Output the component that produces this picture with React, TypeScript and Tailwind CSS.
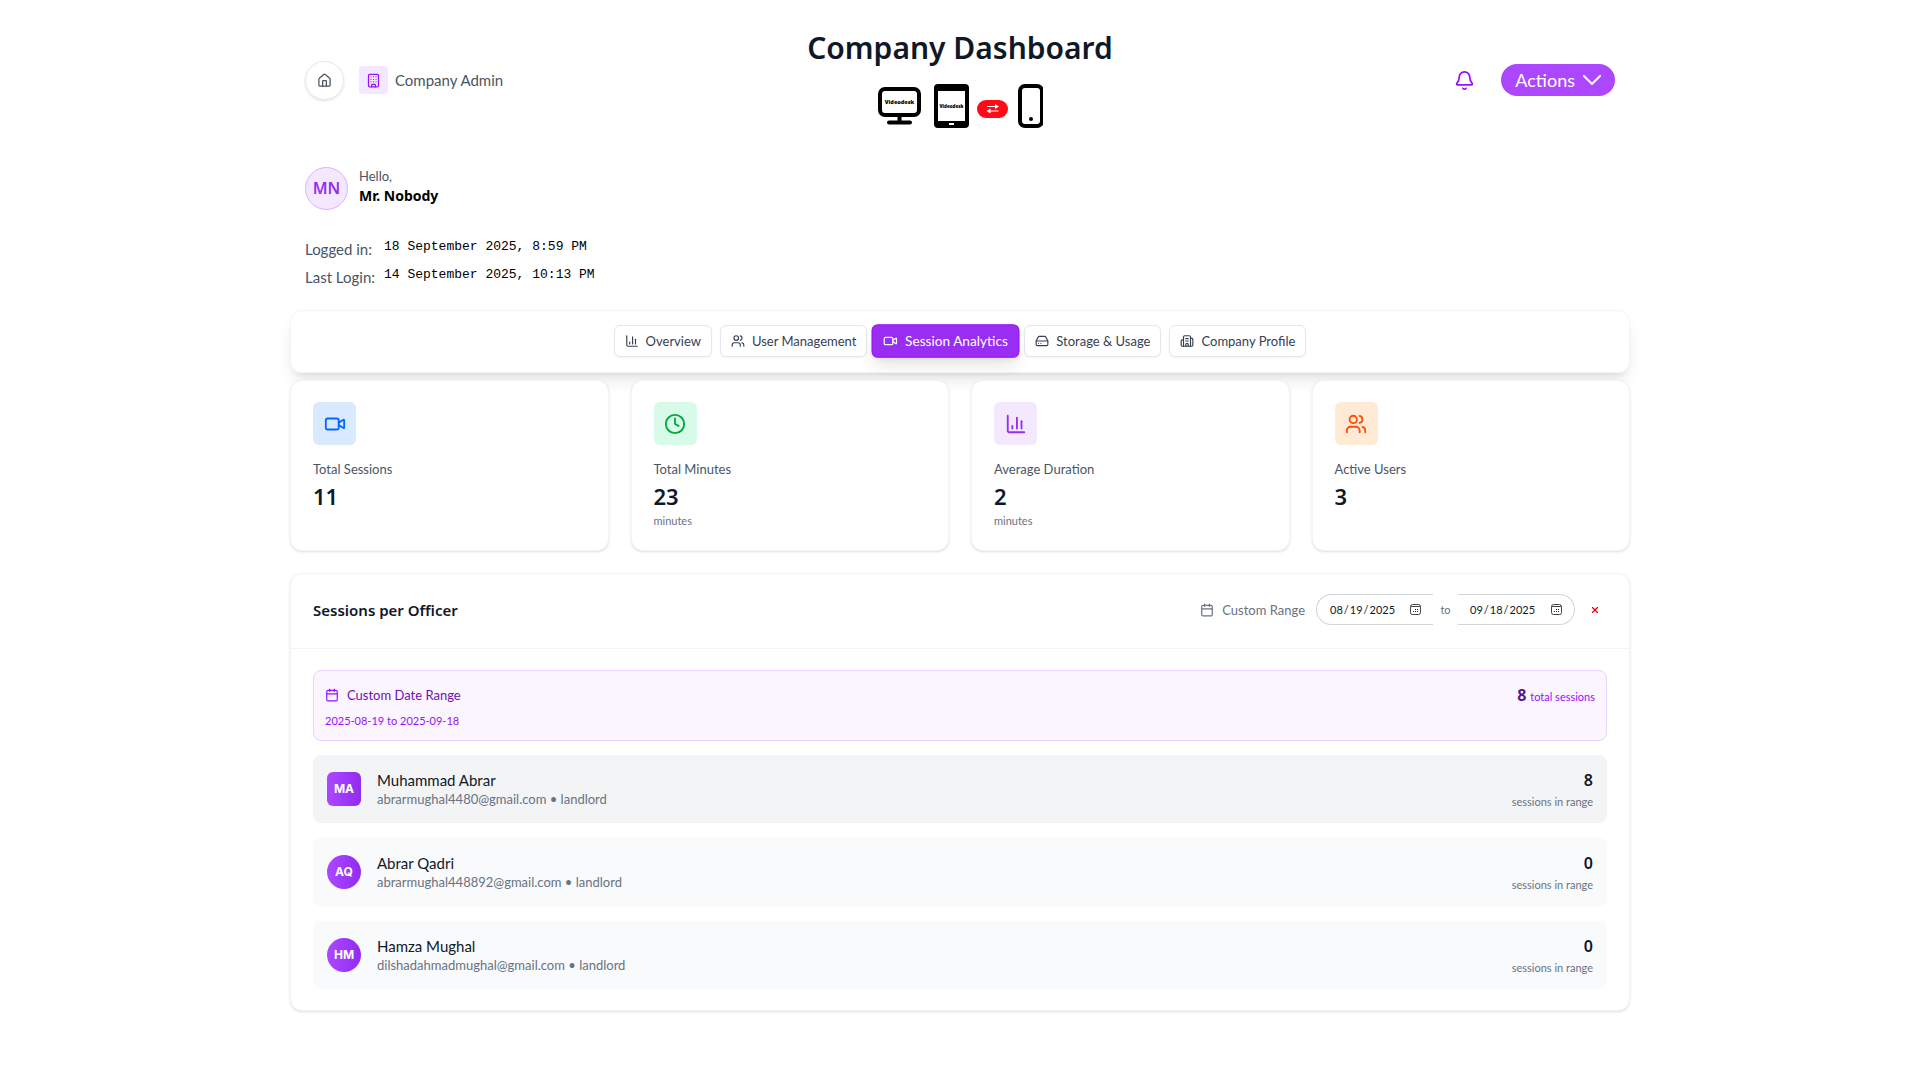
import React from "react";
import {
  Bell,
  Building,
  Building2,
  Calendar,
  ChartColumn,
  Clock,
  HardDrive,
  House,
  Users,
  Video,
  type LucideIcon,
} from "lucide-react";

const tabs: { label: string; icon: LucideIcon; active?: boolean }[] = [
  { label: "Overview", icon: ChartColumn },
  { label: "User Management", icon: Users },
  { label: "Session Analytics", icon: Video, active: true },
  { label: "Storage & Usage", icon: HardDrive },
  { label: "Company Profile", icon: Building2 },
];

const stats: { label: string; value: string; unit?: string; icon: LucideIcon; tone: string }[] = [
  { label: "Total Sessions", value: "11", icon: Video, tone: "bg-[#d8eafd] text-[#0866ff]" },
  { label: "Total Minutes", value: "23", unit: "minutes", icon: Clock, tone: "bg-[#d7fbe8] text-green-600" },
  { label: "Average Duration", value: "2", unit: "minutes", icon: ChartColumn, tone: "bg-[#f3e8fd] text-[#962df0]" },
  { label: "Active Users", value: "3", icon: Users, tone: "bg-[#ffead6] text-[#ff4d08]" },
];

const officers = [
  { initials: "MA", name: "Muhammad Abrar", email: "abrarmughal4480@gmail.com", role: "landlord", count: 8, row: "bg-gray-100", avatar: "rounded-md" },
  { initials: "AQ", name: "Abrar Qadri", email: "abrarmughal448892@gmail.com", role: "landlord", count: 0, row: "bg-gray-50", avatar: "rounded-full" },
  { initials: "HM", name: "Hamza Mughal", email: "dilshadahmadmughal@gmail.com", role: "landlord", count: 0, row: "bg-gray-50", avatar: "rounded-full" },
];

function DevicesLogo() {
  return (
    <svg width="166" height="46" viewBox="0 0 166 46" role="img" aria-label="Videodesk">
      <rect x="3" y="5" width="39" height="26" rx="5" fill="none" stroke="#000" strokeWidth="4" />
      <path d="M22.5 31v7M12 38.5h21" stroke="#000" strokeWidth="4" strokeLinecap="round" />
      <text x="22.5" y="20" textAnchor="middle" fontSize="5.5" fontWeight="900" fontFamily="Noto Sans, sans-serif">Videodesk</text>
      <rect x="57" y="0" width="35" height="44" rx="4" fill="#000" />
      <rect x="61" y="7" width="27" height="30" fill="#fff" />
      <rect x="72" y="39" width="5" height="2" fill="#fff" />
      <text x="74.5" y="24" textAnchor="middle" fontSize="4.5" fontWeight="900" fontFamily="Noto Sans, sans-serif">Videodesk</text>
      <rect x="100" y="16" width="31" height="18" rx="9" fill="#ff0a16" />
      <path d="M110 22.5h9M112 27h9.5" stroke="#fff" strokeWidth="1" />
      <path d="M118 20l4 2.5-4 2.5zM113.500 24.500l-4 2.500 4 2.500z" fill="#fff" />
      <rect x="143" y="2" width="22" height="40" rx="5" fill="none" stroke="#000" strokeWidth="4" />
      <circle cx="154" cy="35" r="2" fill="#000" />
    </svg>
  );
}

function DateField({ label, value, shape }: { label: string; value: string; shape: string }) {
  return (
    <div className={`relative flex h-[31px] w-[117px] items-center border-y border-gray-300 ${shape}`}>
      <input
        type="date"
        aria-label={label}
        defaultValue={value}
        className="w-full bg-transparent text-[11px] leading-4 text-gray-900 outline-none [&::-webkit-calendar-picker-indicator]:opacity-0"
      />
      <svg className="pointer-events-none absolute right-3 h-[11px] w-[11px]" viewBox="0 0 11 11" fill="none" aria-hidden="true">
        <rect x="0.5" y="0.5" width="10" height="10" rx="2" stroke="#444" />
        <path d="M1 2.5h9" stroke="#444" />
        <path d="M5 5.5h1M7 5.5h1M3 7.5h1M5 7.5h1M7 7.5h1" stroke="#222" />
      </svg>
    </div>
  );
}

export default function App() {
  return (
    <div className="min-h-screen bg-white font-['Lato','Noto_Sans',sans-serif] text-gray-900">
      <div className="mx-auto max-w-[1340px] pt-7">
        <header className="grid grid-cols-3 items-center px-[15px]">
          <div className="flex items-center gap-[15px] pt-0.5">
            <button aria-label="Home" className="flex h-[39px] w-[39px] items-center justify-center rounded-full border border-gray-200 text-gray-600 shadow">
              <House className="h-[15px] w-[15px]" />
            </button>
            <div className="flex items-center gap-[7px]">
              <span className="flex h-7 w-[29px] items-center justify-center rounded bg-purple-100 text-purple-600">
                <Building className="h-[15px] w-[15px]" />
              </span>
              <span className="text-[15px] leading-5 text-gray-600">Company Admin</span>
            </div>
          </div>
          <div className="flex flex-col items-center gap-4">
            <h1 className="font-['Noto_Sans',sans-serif] text-[30px] leading-10 font-semibold whitespace-nowrap">Company Dashboard</h1>
            <DevicesLogo />
          </div>
          <div className="flex items-center justify-end gap-[26px] pt-0.5">
            <button aria-label="Notifications" className="text-purple-600">
              <Bell className="h-[21px] w-[21px]" />
            </button>
            <button className="flex h-8 items-center gap-2 rounded-full bg-purple-500 px-3.5 text-lg leading-6 text-white">
              Actions
              <svg className="h-[10px] w-[18px]" viewBox="0 0 18 10" fill="none" stroke="currentColor" strokeWidth="2" strokeLinecap="round" strokeLinejoin="round" aria-hidden="true">
                <path d="M1 1l8 8 8-8" />
              </svg>
            </button>
          </div>
        </header>

        <section className="mt-9 px-[15px]">
          <div className="flex items-center gap-[11px]">
            <span className="flex h-[43px] w-[43px] items-center justify-center rounded-full border border-purple-300 bg-purple-100 font-['Noto_Sans',sans-serif] text-base font-semibold text-[#962df0]">MN</span>
            <div className="pb-1">
              <p className="text-[13px] leading-5 text-gray-600">Hello,</p>
              <p className="font-['Noto_Sans',sans-serif] text-sm leading-5 font-bold text-black">Mr. Nobody</p>
            </div>
          </div>
          <dl className="mt-[25px] grid grid-cols-[68px_auto] justify-start gap-x-[11px] text-[15px] leading-7">
            <dt className="whitespace-nowrap text-gray-600">Logged in:</dt>
            <dd className="font-['Liberation_Mono',monospace] text-[13px] leading-6 text-black">18 September 2025, 8:59 PM</dd>
            <dt className="whitespace-nowrap text-gray-600">Last Login:</dt>
            <dd className="font-['Liberation_Mono',monospace] text-[13px] leading-6 text-black">14 September 2025, 10:13 PM</dd>
          </dl>
        </section>

        <nav className="mt-[19px] flex justify-center gap-2 rounded-xl border border-gray-100 pt-3.5 pb-[15px] shadow-lg">
          {tabs.map(({ label, icon: Icon, active }) => (
            <button
              key={label}
              className={`flex h-8 items-center gap-[7px] rounded-md border px-2.5 text-[13px] leading-5 ${
                active ? "scale-105 border-purple-600 bg-[#9a2df2] text-white shadow-lg" : "border-gray-200 bg-white text-gray-700 shadow-xs"
              }`}
            >
              <Icon className="h-[14px] w-[14px]" />
              {label}
            </button>
          ))}
        </nav>

        <section className="relative mt-[7px] grid grid-cols-4 gap-[22px]">
          {stats.map(({ label, value, unit, icon: Icon, tone }) => (
            <article key={label} className="h-[171px] rounded-xl border border-gray-100 bg-white px-[22px] py-[21px] shadow-sm">
              <span className={`flex h-[43px] w-[43px] items-center justify-center rounded-md ${tone}`}>
                <Icon className="h-[22px] w-[22px]" />
              </span>
              <h3 className="mt-3.5 text-[13px] leading-5 text-gray-600">{label}</h3>
              <p className="font-['Noto_Sans',sans-serif] text-[22px] leading-[34px] font-semibold">{value}</p>
              {unit && <p className="text-[11px] leading-4 text-gray-500">{unit}</p>}
            </article>
          ))}
        </section>

        <section className="mt-[22px] rounded-xl border border-gray-100 bg-white shadow-sm">
          <div className="flex items-center justify-between border-b border-gray-100 px-[22px] pt-5 pb-[23px]">
            <h2 className="font-['Noto_Sans',sans-serif] text-[15px] leading-6 font-semibold">Sessions per Officer</h2>
            <div className="flex items-center">
              <Calendar className="mr-2 h-[14px] w-[14px] text-gray-500" />
              <span className="mr-[11px] text-[13px] leading-5 text-gray-500">Custom Range</span>
              <DateField label="Start date" value="2025-08-19" shape="rounded-l-full border-l pl-3" />
              <span className="w-[25px] text-center text-[11px] leading-4 text-gray-500">to</span>
              <DateField label="End date" value="2025-09-18" shape="rounded-r-full border-r pl-[11px]" />
              <button aria-label="Clear range" className="ml-2 flex h-6 w-6 items-center justify-center text-red-600">
                <svg className="h-[6px] w-[6px]" viewBox="0 0 6 6" stroke="currentColor" strokeWidth="1.3" aria-hidden="true">
                  <path d="M0 0l6 6M6 0L0 6" />
                </svg>
              </button>
            </div>
          </div>

          <div className="px-[22px] py-[21px]">
            <div className="flex items-start justify-between rounded-lg border border-purple-200 bg-purple-50 px-[11px] pt-3.5 pb-[9px]">
              <div>
                <p className="flex items-center gap-2 text-[13px] leading-5 text-purple-800">
                  <Calendar className="h-[14px] w-[14px] text-purple-600" />
                  Custom Date Range
                </p>
                <p className="mt-1.5 text-[11px] leading-5 text-purple-600">2025-08-19 to 2025-09-18</p>
              </div>
              <p className="text-[11px] leading-5 text-purple-600">
                <strong className="mr-px font-['Noto_Sans',sans-serif] text-base leading-5 font-bold text-purple-900">8</strong> total sessions
              </p>
            </div>
            <ul className="mt-3.5 flex flex-col gap-[15px]">
              {officers.map((o) => (
                <li key={o.name} className={`flex h-[68px] items-center rounded-lg px-3.5 ${o.row}`}>
                  <span className={`flex h-[34px] w-[34px] items-center justify-center bg-linear-to-r from-purple-500 to-[#912ced] font-['Inter',sans-serif] text-xs font-bold text-white ${o.avatar}`}>
                    {o.initials}
                  </span>
                  <div className="ml-4 flex-1">
                    <p className="text-[15px] leading-5">{o.name}</p>
                    <p className="text-[13px] leading-[18px] text-gray-500">{o.email} • {o.role}</p>
                  </div>
                  <div className="pt-0.5 text-right">
                    <p className="font-['Noto_Sans',sans-serif] text-base leading-5 font-semibold">{o.count}</p>
                    <p className="mt-1 text-[11px] leading-4 text-gray-500">sessions in range</p>
                  </div>
                </li>
              ))}
            </ul>
          </div>
        </section>
      </div>
    </div>
  );
}
